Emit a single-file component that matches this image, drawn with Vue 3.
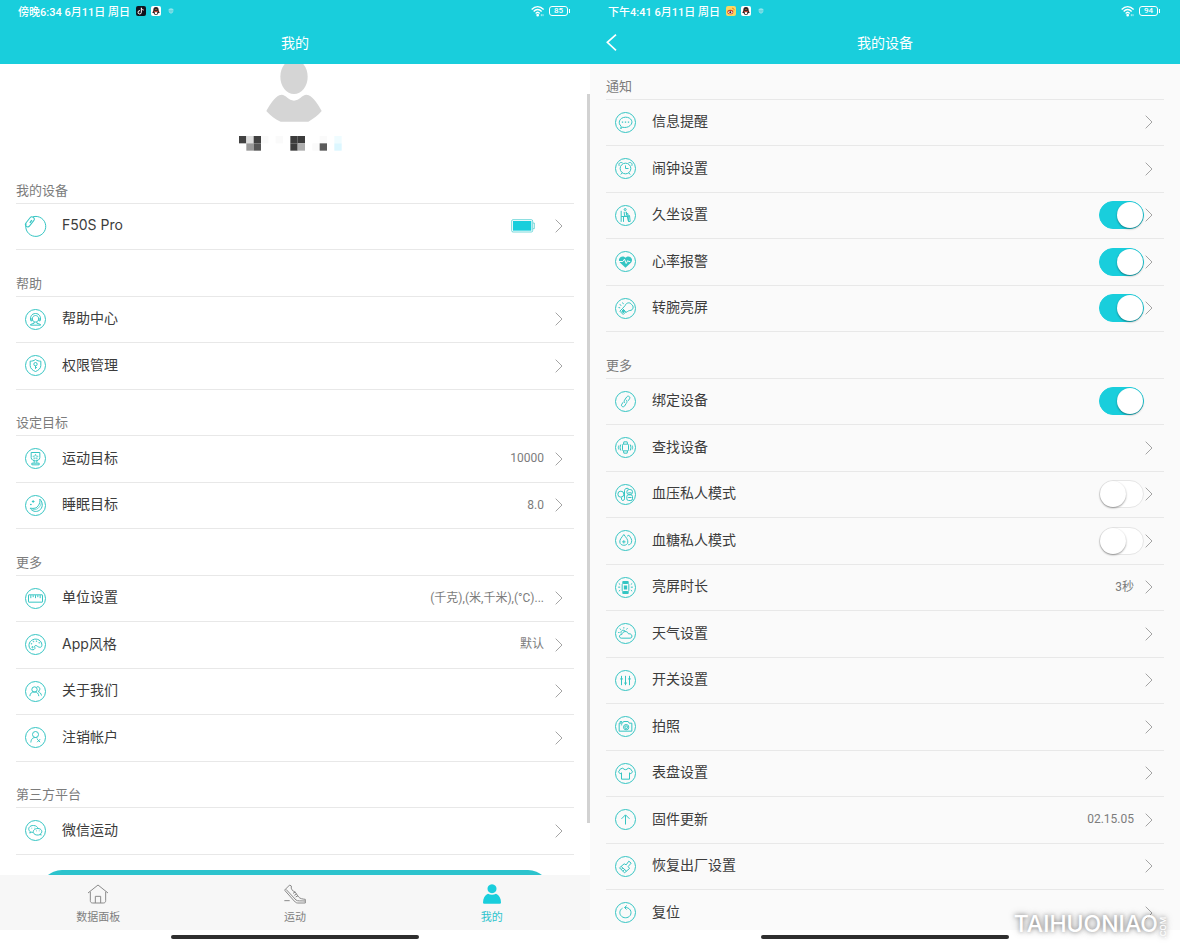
<script setup>
import { reactive } from 'vue'

const icons = {
  watch: '<path d="M-8 -29 A30 30 0 1 1 -28 -9"/><rect x="-17" y="-7" width="34" height="14" rx="7" transform="translate(-17 -14) rotate(-52)"/><path d="M-17 -11 L-11 -19" stroke-width="4"/>',
  help: '<path d="M-14 2 C-17 -7 -12 -18 0 -18 C12 -18 17 -7 14 2"/><path d="M-8 3 C-11 -4 -9 -11 0 -12 C9 -11 11 -4 8 3 C5 9 -5 9 -8 3Z"/><path d="M-14 -4 v8 h4 v-8 M14 -4 v8 h-4 v-8"/><path d="M-4 7 v4 L-15 15 V17 H15 V15 L4 11 V7"/>',
  shield: '<path d="M0 -18 C5 -14 10 -13 16 -13 V0 C16 9 8 15 0 18 C-8 15 -16 9 -16 0 V-13 C-10 -13 -5 -14 0 -18Z"/><circle cx="0" cy="-4" r="5"/><path d="M0 1 V10 M0 6 H4"/>',
  cup: '<path d="M-13 -18 H13 V-3 C13 4 6 7 0 7 C-6 7 -13 4 -13 -3Z"/><path d="M0 -13 L2 -7 L8 -7 L4 -3 L5 2 L0 -1 L-5 2 L-4 -3 L-8 -7 L-2 -7Z" stroke-width="2"/><path d="M-4 7 V13 M4 7 V13 M-11 14 H11 V19 H-11Z"/>',
  moon: '<path d="M13 -19 C24 -8 22 8 11 15 C1 21 -11 17 -16 8 C-4 10 4 8 8 1 C13 -6 14 -12 13 -19Z"/><path d="M-10 11 C0 14 8 10 12 4 C15 0 17 -5 17 -9" stroke-width="2"/><path d="M-7 -16 v8 M-11 -12 h8 M-14 -5 v4 M-16 -3 h4"/>',
  ruler: '<rect x="-21" y="-11" width="42" height="22" rx="1"/><path d="M-14 -10 v9 M-7 -10 v6 M0 -10 v9 M7 -10 v6 M14 -10 v9"/>',
  palette: '<path d="M-16 13 C-24 2 -18 -13 -3 -16 C11 -18 20 -7 19 3 C18 12 8 8 4 4 C0 1 -5 5 -2 9 C0 15 -9 19 -16 13Z"/><circle cx="-12" cy="-2" r="1"/><circle cx="-6" cy="-9" r="1"/><circle cx="3" cy="-10" r="1"/><circle cx="11" cy="-5" r="1"/><circle cx="-9" cy="8" r="2"/>',
  people: '<circle cx="-3" cy="-6" r="8"/><path d="M-17 14 C-16 5 -11 1 -3 1 C5 1 9 6 10 14"/><path d="M4 -14 C13 -16 17 -5 8 0 C13 2 17 6 18 12"/>',
  remove: '<circle cx="0" cy="-9" r="9"/><path d="M-14 15 C-13 4 -8 0 0 0 C2 0 4 1 6 2"/><path d="M5 5 L14 14 M14 5 L5 14"/>',
  wechat: '<path d="M-8 6 L-13 5 L-17 8 L-16 3 C-26 -5 -17 -16 -6 -15 C2 -15 7 -10 7 -6"/><path d="M14 12 L17 14 L15 10 C23 4 18 -6 7 -6 C-4 -6 -10 2 -5 9 C-1 14 8 15 14 12Z"/><path d="M-12 -7 h2 M-3 -7 h2 M2 1 h2 M10 1 h2"/>',
  message: '<path d="M-10 14 L-14 19 L-13 11 C-24 3 -19 -15 0 -16 C18 -16 25 0 14 9 C8 15 -2 16 -10 14Z"/><path d="M-11 -1 h4 M-2 -1 h4 M7 -1 h4" stroke-width="4"/>',
  alarm: '<circle cx="0" cy="0" r="16"/><path d="M0 -9 V0 H9 M-19 -8 C-22 -16 -15 -20 -9 -17 M19 -8 C22 -16 15 -20 9 -17 M-10 13 L-14 18 M10 13 L14 18"/>',
  sit: '<circle cx="-1" cy="-18" r="3"/><path d="M-13 -14 V19 M-13 3 H10 M-6 3 V19 M-4 -11 L-3 1 L8 4 L9 18 M9 18 H14 L12 0 L3 -2 L2 -11Z M3 -7 L9 -4"/>',
  heart: '<path d="M0 19 L-17 3 C-26 -9 -10 -22 0 -11 C10 -22 26 -9 17 3Z" fill="currentColor" stroke="none"/><path d="M-20 0 H-8 L-3 -7 L2 6 L7 -3 L9 0 H14" stroke="#fafafa"/>',
  wrist: '<path d="M-9 0 L-1 -9 C2 -18 14 -20 18 -12 C26 -8 24 6 13 6 C7 7 6 10 1 12"/><path d="M-17 8 L-9 0 L1 10 L-7 18Z"/><path d="M-11 8 L-7 4 L-3 9 L-7 13Z" fill="currentColor"/><path d="M-17 -13 L-13 -8 M-21 -3 L-16 -2 M-9 -18 L-6 -13"/>',
  link: '<path d="M-2 4 C-6 1 -4 -3 -1 -7 L4 -14 C8 -19 16 -14 12 -8 L8 -2"/><path d="M1 -5 C6 -2 5 2 2 6 L-3 14 C-8 19 -15 13 -11 8 L-7 2"/>',
  find: '<rect x="-9" y="-10" width="18" height="20" rx="3"/><path d="M-6 -10 L-5 -17 H5 L6 -10 M-6 10 L-5 17 H5 L6 10 M-14 -9 C-17 -3 -17 3 -14 9 M14 -9 C17 -3 17 3 14 9 M-20 -6 C-22 -2 -22 2 -20 6 M20 -6 C22 -2 22 2 20 6"/>',
  pressure: '<circle cx="-14" cy="-1" r="9"/><path d="M-12 9 V15 C-11 19 -3 19 -3 13 V-12 C-3 -17 3 -20 9 -18"/><rect x="4" y="-15" width="17" height="15" rx="7"/><rect x="4" y="1" width="17" height="17" rx="5"/><path d="M8 -5 H18 M8 9 H18"/>',
  sugar: '<path d="M-5 -18 C-12 -8 -18 -3 -17 5 C-16 17 6 18 7 5 C8 -3 1 -9 -5 -18Z"/><path d="M5 -13 L10 -16 C17 -7 20 -2 18 5 C17 10 13 13 8 13"/><path d="M-5 -1 V9 M-10 4 H0"/>',
  screen: '<rect x="-10" y="-12" width="20" height="24" rx="3"/><path d="M-8 -13 V-18 H8 V-13 M-8 13 V18 H8 V13" fill="currentColor"/><rect x="-5" y="-6" width="10" height="12" fill="currentColor" stroke="none"/><path d="M-16 -1 H-22 M16 -1 H22 M-16 -9 L-20 -12 M16 -9 L20 -12 M-16 8 L-20 11 M16 8 L20 11"/>',
  weather: '<path d="M-13 14 C-21 13 -19 2 -11 3 C-9 -8 6 -9 9 1 C19 -2 24 13 14 14Z"/><path d="M-13 0 C-16 -9 -6 -13 0 -7 M-5 -15 V-19 M-14 -11 L-17 -15 M-18 -3 H-22 M3 -12 L6 -16"/>',
  sliders: '<path d="M-12 -14 V14 M0 -14 V14 M12 -14 V14"/><path d="M-15 -5 H-9 M-3 8 H3 M9 -5 H15" stroke-width="5"/>',
  camera: '<path d="M-19 -10 H-9 L-6 -15 H8 L11 -10 H19 V14 H-19Z M-16 -11 V-15 H-11 V-11"/><circle cx="2" cy="2" r="8"/><circle cx="2" cy="2" r="4"/><path d="M-14 -5 H-10"/>',
  shirt: '<path d="M-8 -16 C-4 -10 4 -10 8 -16 L15 -14 L21 -5 L16 1 L12 -2 V17 H-12 V-2 L-16 1 L-21 -5 L-15 -14Z"/>',
  up: '<path d="M0 15 V-13 M-12 -2 L0 -14 L12 -2"/>',
  brush: '<path d="M-18 4 L-4 -8 L2 -5 L10 -16 L17 -10 L8 0 L12 6 L-3 19Z"/><path d="M-13 0 L3 14 M-13 9 L-8 5 M-8 14 L-3 10"/>',
  reset: '<path d="M-9 -13 C-18 -8 -19 3 -14 9 C-8 18 8 18 14 9 C21 -2 13 -16 -2 -15"/><path d="M4 -21 L-3 -15 L3 -9"/>'
}

const mine = [
  { title: '我的设备' },
  { icon: 'watch', label: 'F50S Pro', battery: true, arrow: true },
  { title: '帮助' },
  { icon: 'help', label: '帮助中心', arrow: true },
  { icon: 'shield', label: '权限管理', arrow: true },
  { title: '设定目标' },
  { icon: 'cup', label: '运动目标', value: '10000', arrow: true },
  { icon: 'moon', label: '睡眠目标', value: '8.0', arrow: true },
  { title: '更多' },
  { icon: 'ruler', label: '单位设置', value: '(千克),(米,千米),(°C)...', arrow: true },
  { icon: 'palette', label: 'App风格', value: '默认', arrow: true },
  { icon: 'people', label: '关于我们', arrow: true },
  { icon: 'remove', label: '注销帐户', arrow: true },
  { title: '第三方平台' },
  { icon: 'wechat', label: '微信运动', arrow: true }
]

const device = [
  { title: '通知' },
  { icon: 'message', label: '信息提醒', arrow: true },
  { icon: 'alarm', label: '闹钟设置', arrow: true },
  { icon: 'sit', label: '久坐设置', on: true, arrow: true },
  { icon: 'heart', label: '心率报警', on: true, arrow: true },
  { icon: 'wrist', label: '转腕亮屏', on: true, arrow: true },
  { title: '更多' },
  { icon: 'link', label: '绑定设备', on: true },
  { icon: 'find', label: '查找设备', arrow: true },
  { icon: 'pressure', label: '血压私人模式', on: false, arrow: true },
  { icon: 'sugar', label: '血糖私人模式', on: false, arrow: true },
  { icon: 'screen', label: '亮屏时长', value: '3秒', arrow: true },
  { icon: 'weather', label: '天气设置', arrow: true },
  { icon: 'sliders', label: '开关设置', arrow: true },
  { icon: 'camera', label: '拍照', arrow: true },
  { icon: 'shirt', label: '表盘设置', arrow: true },
  { icon: 'up', label: '固件更新', value: '02.15.05', arrow: true },
  { icon: 'brush', label: '恢复出厂设置', arrow: true },
  { icon: 'reset', label: '复位', arrow: true }
]

const screens = reactive([
  { id: 'mine', time: '傍晚6:34 6月11日 周日', charge: '85', title: '我的', app: 'music', items: mine },
  { id: 'device', time: '下午4:41 6月11日 周日', charge: '94', title: '我的设备', app: 'weibo', items: device }
])

const pixels = [
  [0, 0, '#424242'], [22, 0, '#dedede'], [44, 0, '#404040'], [22, 22, '#999999'], [44, 22, '#555555'],
  [66, 0, '#fafafa'], [110, 0, '#fafafa'], [154, 0, '#3c3c3c'], [176, 0, '#3c3c3c'], [154, 22, '#3c3c3c'],
  [176, 22, '#adadad'], [220, 22, '#fafafa'], [242, 0, '#fafafa'], [242, 22, '#5a5a5a'],
  [286, 0, '#effcff'], [286, 22, '#dcf7ff']
]
</script>

<template>
  <div class="page">
    <section v-for="s in screens" :key="s.id" class="screen" :class="s.id">
      <header class="top">
        <div class="status">
          <span class="time">{{ s.time }}</span>
          <svg v-if="s.app === 'music'" class="app" viewBox="0 0 30 30">
            <rect width="30" height="30" rx="6" fill="#10131d" />
            <path d="M16 5 V19 A5 5 0 1 1 12 14 M16 6 C17 10 20 12 23 12" fill="none" stroke="#fff" stroke-width="3" />
            <path d="M18 8 C19 11 21 12 23 13" fill="none" stroke="#ef5a75" stroke-width="1" />
          </svg>
          <svg v-else class="app" viewBox="0 0 30 30">
            <rect width="30" height="30" rx="6" fill="#fbd660" />
            <ellipse cx="13" cy="18" rx="9" ry="7" fill="#d5422e" />
            <ellipse cx="13" cy="19" rx="6" ry="4" fill="#fff" />
            <circle cx="13" cy="19" r="3" fill="#222" />
            <path d="M18 7 C22 6 25 9 24 13" fill="none" stroke="#e08a28" stroke-width="3" />
          </svg>
          <svg class="app qq" viewBox="0 0 30 30">
            <rect width="30" height="30" rx="6" fill="#fff" />
            <path d="M15 3 C8 3 7 8 7 13 L4 21 L8 21 C9 24 11 27 15 27 C19 27 21 24 22 21 L26 21 L23 13 C23 8 22 3 15 3Z" fill="#2b2628" />
            <ellipse cx="15" cy="21" rx="4" ry="4" fill="#fff" />
            <path d="M8 15 C12 18 18 18 22 15" fill="none" stroke="#dd4637" stroke-width="3" />
            <ellipse cx="15" cy="11" rx="3" ry="1" fill="#f2a33a" />
          </svg>
          <svg class="guard" viewBox="0 0 18 18">
            <path d="M9 1 L16 3 V9 C16 14 12 16 9 17 C6 16 2 14 2 9 V3Z" fill="#8ce5ec" />
            <path d="M6 6 V10 L9 13 L12 10 V6" fill="none" stroke="#35bdc9" stroke-width="2" />
          </svg>
          <span class="grow"></span>
          <svg class="wifi" viewBox="0 0 42 32" fill="none" stroke="#fff" stroke-width="4">
            <path d="M2 10 C13 -1 27 -1 38 10 M8 16 C15 8 25 8 32 16 M14 22 C18 17 22 17 26 22" />
            <circle cx="20" cy="27" r="2" fill="#fff" />
            <path d="M31 24 V30 M36 24 V30" stroke-width="2" />
          </svg>
          <span class="charge">{{ s.charge }}</span>
        </div>
        <div class="bar">
          <button v-if="s.id === 'device'" class="back" type="button" aria-label="返回">
            <svg viewBox="0 0 33 51"><path d="M30 2 L4 25 L30 49" fill="none" stroke="#fff" stroke-width="5" /></svg>
          </button>
          <h1>{{ s.title }}</h1>
        </div>
      </header>

      <main class="body">
        <div v-if="s.id === 'mine'" class="profile">
          <svg class="avatar" viewBox="0 0 168 174" fill="#d5d5d5">
            <ellipse cx="84" cy="38" rx="41" ry="52" />
            <path d="M1 141 C12 122 25 101 40 94 C57 86 65 110 84 110 C103 110 111 86 128 94 C143 101 156 122 167 141 C157 154 143 164 127 173 H44 C28 166 13 155 1 141Z" />
          </svg>
          <svg class="name" viewBox="0 0 330 45">
            <rect v-for="(p, i) in pixels" :key="i" :x="p[0]" :y="p[1]" width="22" height="22" :fill="p[2]" />
          </svg>
        </div>
        <ul class="list">
          <li v-for="(item, i) in s.items" :key="i" :class="item.title ? 'group' : 'row'">
            <h2 v-if="item.title">{{ item.title }}</h2>
            <template v-else>
              <component
                :is="'on' in item ? 'label' : 'a'"
                class="entry"
                :href="'on' in item ? undefined : '#'"
                :for="'on' in item ? 'switch-' + i : undefined"
              >
                <svg class="icon" viewBox="-34.5 -34.5 69 69">
                  <circle v-if="item.icon !== 'watch'" r="30" />
                  <g v-html="icons[item.icon]"></g>
                </svg>
                <span class="label">{{ item.label }}</span>
                <span v-if="item.value" class="value">{{ item.value }}</span>
                <svg v-if="item.battery" class="battery" viewBox="0 0 72 42">
                  <rect x="2" y="2" width="63" height="37" rx="4" fill="none" stroke="#35c5c9" stroke-width="2" />
                  <rect x="6" y="6" width="55" height="29" fill="#19cedc" />
                  <path d="M66 12 H70 V29 H66" fill="none" stroke="#35c5c9" stroke-width="2" />
                </svg>
              </component>
              <input v-if="'on' in item" :id="'switch-' + i" v-model="item.on" class="switch" type="checkbox" role="switch" />
              <svg class="arrow" viewBox="0 0 24 42">
                <path v-if="item.arrow" d="M2 2 L21 21 L2 40" />
              </svg>
            </template>
          </li>
        </ul>
        <button v-if="s.id === 'mine'" class="action" type="button" aria-label="退出登录"></button>
        <span v-if="s.id === 'mine'" class="thumb"></span>
      </main>

      <nav v-if="s.id === 'mine'" class="tabs">
        <a href="#">
          <svg viewBox="0 0 66 60">
            <path d="M3 27 L33 3 L63 27 M10 23 V50 C10 54 12 57 17 57 H49 C54 57 56 54 56 50 V23 M25 57 V37 H41 V57" />
          </svg>
          数据面板
        </a>
        <a href="#">
          <svg viewBox="0 0 66 60">
            <path d="M2 18 L17 3 L22 6 C20 16 25 20 33 24 L44 39 C48 44 55 45 64 46 V57 H41 C35 57 32 52 28 48 L3 20Z M6 16 L36 48 C40 52 51 50 63 51 M27 28 L34 24 M31 34 L38 30 M35 39 L42 35 M1 50 H17" />
          </svg>
          运动
        </a>
        <a href="#" class="active">
          <svg viewBox="0 0 66 60">
            <path d="M33 1 C15 1 15 28 33 28 C51 28 51 1 33 1Z M21 29 C12 33 6 42 6 56 Q6 59 10 59 H56 Q60 59 60 56 C60 42 54 33 45 29 C38 33 28 33 21 29Z" />
          </svg>
          我的
        </a>
      </nav>
      <div class="home"><span></span></div>
    </section>
    <div class="mark"><span>TAIHUONIAO</span><small>.COM</small></div>
  </div>
</template>

<style>
body {
  margin: 0;
  background: #fff;
}
</style>

<style scoped>
* {
  box-sizing: border-box;
}

.page {
  position: relative;
  display: grid;
  grid-template-columns: 1fr 1fr;
  height: 100vh;
  overflow: hidden;
  color: #3c3c3c;
  font-family: "Noto Sans CJK SC", "Noto Sans", sans-serif;
}

.screen {
  display: flex;
  flex-direction: column;
  min-width: 0;
  min-height: 0;
}

.top {
  flex: none;
  color: #fff;
  background: #19cedc;
}

.status {
  display: flex;
  align-items: center;
  height: 22px;
  padding: 0 20px 0 18px;
  font-family: Roboto, "Noto Sans CJK SC", sans-serif;
  font-size: 11px;
  font-weight: 500;
}

.time {
  margin-right: 6px;
}

.app {
  width: 10px;
  height: 10px;
}

.qq {
  margin: 0 7px 0 5px;
}

.guard {
  width: 6px;
  height: 6px;
}

.grow {
  flex: 1;
}

.wifi {
  width: 14px;
  height: 11px;
  margin-right: 4px;
}

.charge {
  position: relative;
  width: 19px;
  height: 10px;
  margin-right: 2px;
  border: 1px solid #fff;
  border-radius: 3px;
  font-size: 8px;
  line-height: 8px;
  text-align: center;
}

.charge::after {
  position: absolute;
  top: 2px;
  right: -3px;
  width: 1px;
  height: 4px;
  background: #fff;
  content: "";
}

.bar {
  position: relative;
  display: flex;
  align-items: center;
  justify-content: center;
  height: 42px;
  padding-bottom: 2px;
}

h1 {
  margin: 0;
  font-size: 14px;
  font-weight: 400;
  line-height: 20px;
}

.back {
  position: absolute;
  left: 16px;
  padding: 0;
  border: 0;
  background: none;
}

.back svg {
  display: block;
  width: 11px;
  height: 17px;
}

.body {
  position: relative;
  flex: 1;
  min-height: 0;
  overflow: hidden;
}

.device .body {
  background: #fafafa;
}

.profile {
  display: flex;
  flex-direction: column;
  align-items: center;
  gap: 14px;
  padding: 0 2px 17px 0;
}

.avatar {
  width: 56px;
  height: 58px;
}

.name {
  width: 110px;
  height: 15px;
}

.list {
  margin: 0 16px;
  padding: 0;
  list-style: none;
}

.list li {
  display: flex;
  height: 47px;
  border-bottom: 1px solid #e8e8e8;
}

.list li:nth-child(even) {
  height: 46px;
}

.list li:first-child {
  height: 36px;
}

.group {
  align-items: flex-end;
}

h2 {
  margin: 0 0 4px;
  color: #7c7c7c;
  font-size: 13px;
  font-weight: 400;
  line-height: 18px;
}

.list .row {
  align-items: center;
  padding: 0 11px 1px 8px;
}

.entry {
  display: flex;
  flex: 1;
  align-items: center;
  height: 100%;
  color: inherit;
  text-decoration: none;
}

.icon {
  width: 23px;
  height: 23px;
  margin-right: 15px;
  color: #35c5c3;
  fill: none;
  stroke: currentColor;
  stroke-width: 3;
}

.label {
  flex: 1;
  padding-bottom: 2px;
  font-family: Inter, "Noto Sans CJK SC", sans-serif;
  font-size: 14px;
  line-height: 20px;
}

.value {
  margin-right: 11px;
  padding-bottom: 1px;
  color: #7c7c7c;
  font-family: Roboto, "Noto Sans CJK SC", sans-serif;
  font-size: 12px;
  line-height: 20px;
}

.battery {
  width: 24px;
  height: 14px;
  margin-right: 20px;
}

.arrow {
  width: 8px;
  height: 14px;
  fill: none;
  stroke: #a4a4a4;
  stroke-width: 3;
}

.switch {
  position: relative;
  width: 45px;
  height: 28px;
  margin: 0 1px 0 0;
  border: 1px solid #e6e6e6;
  border-radius: 14px;
  background: #fff;
  appearance: none;
}

.switch::before {
  position: absolute;
  top: 0;
  left: 0;
  width: 26px;
  height: 26px;
  border-radius: 50%;
  background: #fff;
  box-shadow: 0 1px 2px rgba(0, 0, 0, 0.4);
  content: "";
}

.switch:checked {
  border-color: #19cedc;
  background: #19cedc;
}

.switch:checked::before {
  right: 0;
  left: auto;
}

.action {
  display: block;
  width: calc(100% - 80px);
  height: 44px;
  margin: 15px 40px;
  border: 0;
  border-radius: 22px;
  background: #2cc3cd;
}

.thumb {
  position: absolute;
  top: 30px;
  right: 0;
  bottom: 52px;
  width: 3px;
  background: #d2d2d2;
}

.tabs {
  display: grid;
  flex: none;
  grid-template-columns: repeat(3, 1fr);
  height: 55px;
  background: #f7f7f7;
}

.tabs a {
  display: flex;
  flex-direction: column;
  align-items: center;
  gap: 4px;
  padding-top: 9px;
  color: #808080;
  font-size: 11px;
  line-height: 16px;
  text-decoration: none;
}

.tabs svg {
  width: 22px;
  height: 20px;
  fill: none;
  stroke: #8a8a8a;
  stroke-width: 3;
}

.tabs .active {
  color: #2cc3cd;
}

.tabs .active svg {
  fill: #19cedc;
  stroke: none;
}

.home {
  display: flex;
  flex: none;
  align-items: center;
  justify-content: center;
  height: 14px;
}

.home span {
  width: 42%;
  height: 4px;
  border-radius: 2px;
  background: #2e2e2e;
}

.mark {
  position: absolute;
  right: 12px;
  bottom: 6px;
  display: flex;
  align-items: flex-end;
  color: #fff;
  font-family: Inter, sans-serif;
  font-size: 23px;
  font-weight: 500;
  line-height: 28px;
  text-shadow: 0 0 4px rgba(0, 0, 0, 0.4), 0 0 8px rgba(0, 0, 0, 0.3);
}

.mark small {
  font-size: 8px;
  line-height: 10px;
  transform: rotate(180deg);
  writing-mode: vertical-rl;
}
</style>
